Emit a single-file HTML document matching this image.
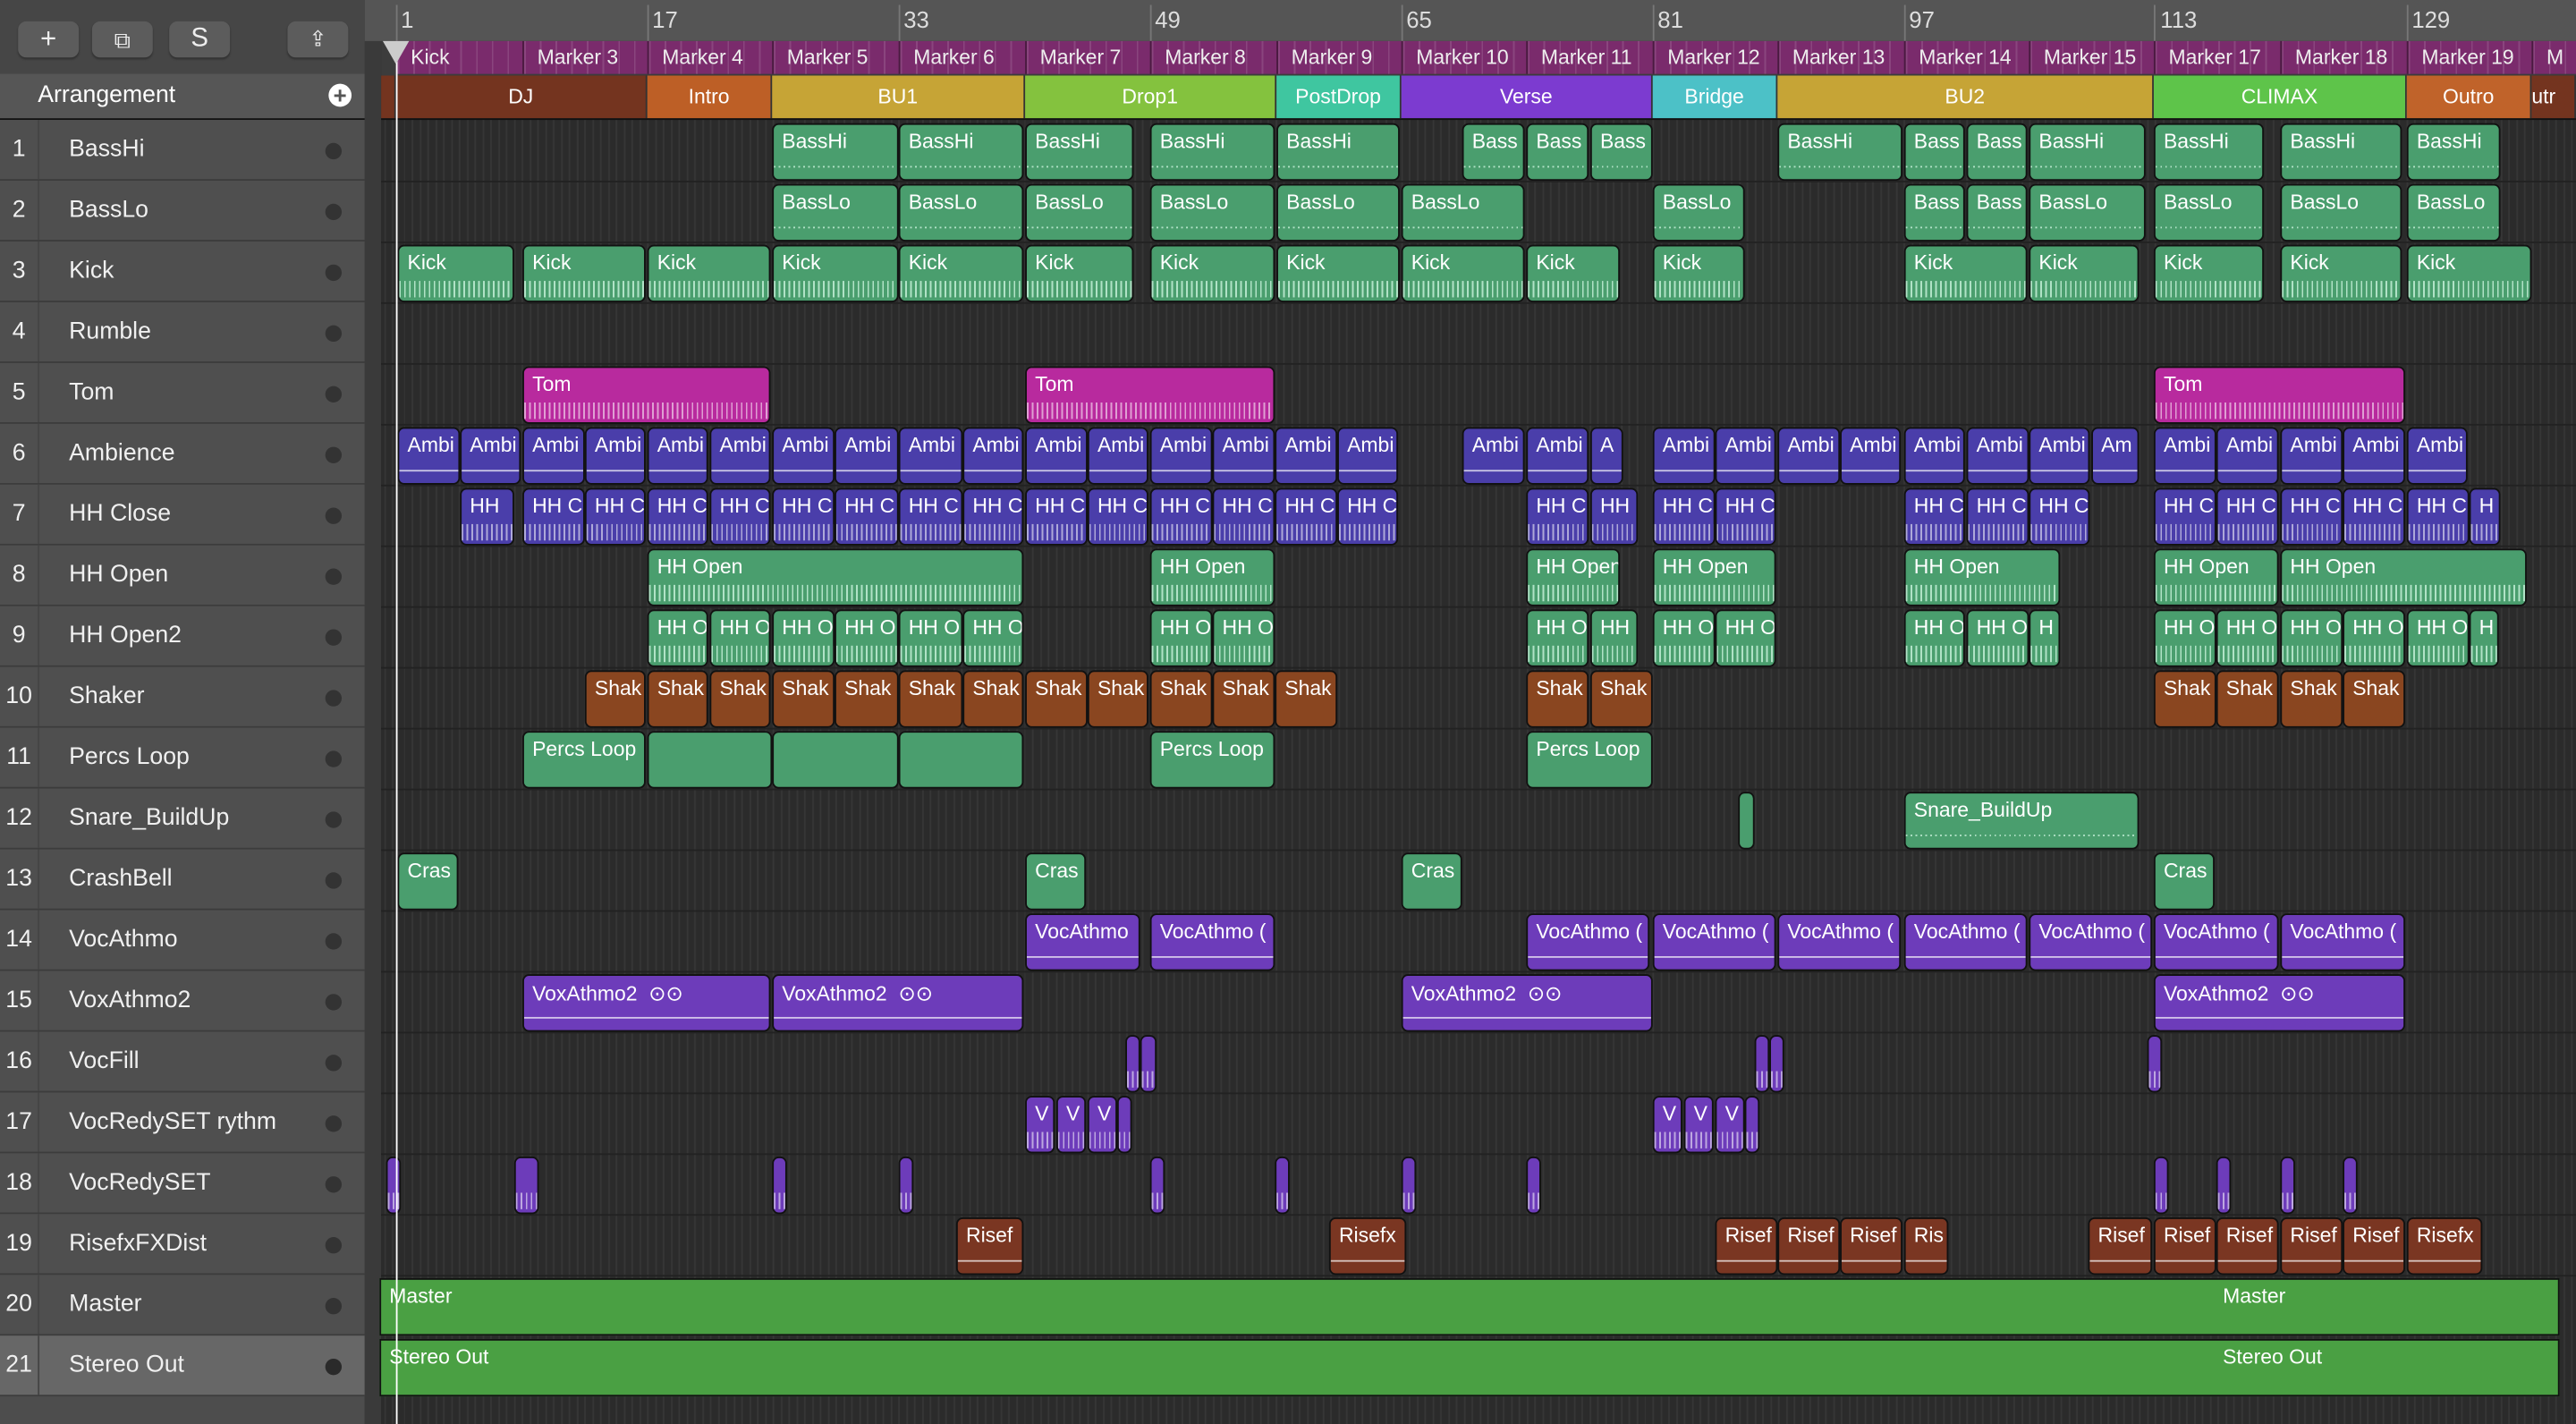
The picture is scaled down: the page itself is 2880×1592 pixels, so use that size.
<!DOCTYPE html>
<html><head><meta charset="utf-8"><style>
html,body{margin:0;padding:0;background:#2b2b2b;overflow:hidden}
#s{position:absolute;left:0;top:0;width:1568px;height:867px;transform:scale(1.836735);transform-origin:0 0;font-family:"Liberation Sans",sans-serif;background:#2b2b2b;overflow:hidden}
.ab{position:absolute}
#lp{left:0;top:0;width:222px;height:867px;background:#4d4d4d}
.btn{position:absolute;top:13px;width:37px;height:22px;border-radius:5px;background:#5c5c5c;box-shadow:0 1px 1px #333;color:#eee;text-align:center;font-size:17px;line-height:22px}
.tr{position:absolute;left:0;width:222px;height:36px;border-bottom:1px solid #3c3c3c;background:#4f4f4f;color:#f0f0f0;font-size:14.5px}
.tr .n{position:absolute;left:0;width:23px;top:10px;text-align:center}
.tr .sep{position:absolute;left:23px;top:0;width:1px;height:36px;background:#444}
.tr .t{position:absolute;left:42px;top:10px}
.tr .d{position:absolute;left:198px;top:14px;width:10px;height:10px;border-radius:50%;background:#333}
#grid{left:232px;top:73px;width:1336px;height:794px;background-color:#2b2b2b;background-image:repeating-linear-gradient(90deg,#363636 0 1px,transparent 1px 4.78px);background-position:9px 0}
.rl{position:absolute;left:232px;width:1336px;height:1px;background:#222}
.r{position:absolute;height:35px;box-sizing:border-box;border:1px solid #111;border-radius:4px;color:#fff;font-size:12.5px;font-style:normal;padding:3px 0 0 5px;overflow:hidden;white-space:nowrap}
.r:after{content:"";position:absolute;left:0;right:0;bottom:2px;height:10px;background:repeating-linear-gradient(90deg,rgba(255,255,255,.55) 0 1px,transparent 1px 3px)}
.nw:after{display:none}
.ln:after{height:1px;bottom:7px;background:rgba(255,255,255,.7)}
.g{background:#4a9e6e}.g:after{background:repeating-linear-gradient(90deg,rgba(220,255,235,.7) 0 1px,transparent 1px 3px)}
.b{background:#4a3eaa}.p{background:#b82a9e}.v{background:#6d3cba}.o{background:#8a4620}.rb{background:#7a3622}
.m{position:absolute;top:25px;height:20px;background:#7a2b6c;border-left:1px solid #4a1a40;color:#eee;font-size:12.5px;line-height:20px;padding-left:8px;box-sizing:border-box;background-image:repeating-linear-gradient(90deg,rgba(255,255,255,.12) 0 1px,transparent 1px 9.56px)}
.a{position:absolute;top:46px;height:26px;color:#fff;font-size:12.5px;line-height:26px;text-align:center;box-sizing:border-box;border-right:1px solid #333}
.bn{position:absolute;top:4px;color:#ddd;font-size:14px}
.bt{position:absolute;top:3px;width:1px;height:22px;background:#777}
.big{position:absolute;left:231px;width:1327px;height:35px;background:#4aa043;border:1px solid #111;box-sizing:border-box;color:#fff;font-size:12.5px}
</style></head><body><div id="s">
<div id="lp" class="ab"></div>
<div class="ab" style="left:0;top:0;width:222px;height:45px;background:#464646"></div>
<div class="btn" style="left:11px">+</div>
<div class="btn" style="left:56px;font-size:14px">⧉</div>
<div class="btn" style="left:103px;font-size:16px">S</div>
<div class="btn" style="left:175px;font-size:13px">⇪</div>
<div class="ab" style="left:0;top:45px;width:222px;height:27px;background:#565656;color:#fff;font-size:14.5px"><span style="position:absolute;left:23px;top:5px">Arrangement</span><span style="position:absolute;left:200px;top:6px;width:14px;height:14px;border-radius:50%;background:#fff;color:#555;text-align:center;line-height:14px;font-size:14px;font-weight:bold">+</span></div>
<div class="ab" style="left:0;top:72px;width:222px;height:1px;background:#111"></div>
<div class="tr" style="top:73px"><span class="n">1</span><span class="sep"></span><span class="t">BassHi</span><span class="d"></span></div>
<div class="tr" style="top:110px"><span class="n">2</span><span class="sep"></span><span class="t">BassLo</span><span class="d"></span></div>
<div class="tr" style="top:147px"><span class="n">3</span><span class="sep"></span><span class="t">Kick</span><span class="d"></span></div>
<div class="tr" style="top:184px"><span class="n">4</span><span class="sep"></span><span class="t">Rumble</span><span class="d"></span></div>
<div class="tr" style="top:221px"><span class="n">5</span><span class="sep"></span><span class="t">Tom</span><span class="d"></span></div>
<div class="tr" style="top:258px"><span class="n">6</span><span class="sep"></span><span class="t">Ambience</span><span class="d"></span></div>
<div class="tr" style="top:295px"><span class="n">7</span><span class="sep"></span><span class="t">HH Close</span><span class="d"></span></div>
<div class="tr" style="top:332px"><span class="n">8</span><span class="sep"></span><span class="t">HH Open</span><span class="d"></span></div>
<div class="tr" style="top:369px"><span class="n">9</span><span class="sep"></span><span class="t">HH Open2</span><span class="d"></span></div>
<div class="tr" style="top:406px"><span class="n">10</span><span class="sep"></span><span class="t">Shaker</span><span class="d"></span></div>
<div class="tr" style="top:443px"><span class="n">11</span><span class="sep"></span><span class="t">Percs Loop</span><span class="d"></span></div>
<div class="tr" style="top:480px"><span class="n">12</span><span class="sep"></span><span class="t">Snare_BuildUp</span><span class="d"></span></div>
<div class="tr" style="top:517px"><span class="n">13</span><span class="sep"></span><span class="t">CrashBell</span><span class="d"></span></div>
<div class="tr" style="top:554px"><span class="n">14</span><span class="sep"></span><span class="t">VocAthmo</span><span class="d"></span></div>
<div class="tr" style="top:591px"><span class="n">15</span><span class="sep"></span><span class="t">VoxAthmo2</span><span class="d"></span></div>
<div class="tr" style="top:628px"><span class="n">16</span><span class="sep"></span><span class="t">VocFill</span><span class="d"></span></div>
<div class="tr" style="top:665px"><span class="n">17</span><span class="sep"></span><span class="t">VocRedySET rythm</span><span class="d"></span></div>
<div class="tr" style="top:702px"><span class="n">18</span><span class="sep"></span><span class="t">VocRedySET</span><span class="d"></span></div>
<div class="tr" style="top:739px"><span class="n">19</span><span class="sep"></span><span class="t">RisefxFXDist</span><span class="d"></span></div>
<div class="tr" style="top:776px"><span class="n">20</span><span class="sep"></span><span class="t">Master</span><span class="d"></span></div>
<div class="tr" style="top:813px;background:#676767"><span class="n">21</span><span class="sep"></span><span class="t">Stereo Out</span><span class="d" style="background:#2a2a2a"></span></div>
<div class="ab" style="left:222px;top:0;width:10px;height:867px;background:#3a3a3a"></div>
<div class="ab" style="left:222px;top:0;width:1346px;height:25px;background:#555"></div>
<div class="ab" style="left:232px;top:25px;width:1336px;height:21px;background:#3c3c3c"></div>
<div id="grid" class="ab"></div>
<div class="rl" style="top:110px"></div><div class="rl" style="top:147px"></div><div class="rl" style="top:184px"></div><div class="rl" style="top:221px"></div><div class="rl" style="top:258px"></div><div class="rl" style="top:295px"></div><div class="rl" style="top:332px"></div><div class="rl" style="top:369px"></div><div class="rl" style="top:406px"></div><div class="rl" style="top:443px"></div><div class="rl" style="top:480px"></div><div class="rl" style="top:517px"></div><div class="rl" style="top:554px"></div><div class="rl" style="top:591px"></div><div class="rl" style="top:628px"></div><div class="rl" style="top:665px"></div><div class="rl" style="top:702px"></div><div class="rl" style="top:739px"></div><div class="rl" style="top:776px"></div>
<div class="bt" style="left:241px"></div><span class="bn" style="left:244px">1</span>
<div class="bt" style="left:394px"></div><span class="bn" style="left:397px">17</span>
<div class="bt" style="left:547px"></div><span class="bn" style="left:550px">33</span>
<div class="bt" style="left:700px"></div><span class="bn" style="left:703px">49</span>
<div class="bt" style="left:853px"></div><span class="bn" style="left:856px">65</span>
<div class="bt" style="left:1006px"></div><span class="bn" style="left:1009px">81</span>
<div class="bt" style="left:1159px"></div><span class="bn" style="left:1162px">97</span>
<div class="bt" style="left:1311px"></div><span class="bn" style="left:1315px">113</span>
<div class="bt" style="left:1465px"></div><span class="bn" style="left:1468px">129</span>
<div class="m" style="left:241px;width:77px">Kick</div>
<div class="m" style="left:318px;width:76px">Marker 3</div>
<div class="m" style="left:394px;width:76px">Marker 4</div>
<div class="m" style="left:470px;width:77px">Marker 5</div>
<div class="m" style="left:547px;width:77px">Marker 6</div>
<div class="m" style="left:624px;width:76px">Marker 7</div>
<div class="m" style="left:700px;width:77px">Marker 8</div>
<div class="m" style="left:777px;width:76px">Marker 9</div>
<div class="m" style="left:853px;width:76px">Marker 10</div>
<div class="m" style="left:929px;width:77px">Marker 11</div>
<div class="m" style="left:1006px;width:76px">Marker 12</div>
<div class="m" style="left:1082px;width:77px">Marker 13</div>
<div class="m" style="left:1159px;width:76px">Marker 14</div>
<div class="m" style="left:1235px;width:76px">Marker 15</div>
<div class="m" style="left:1311px;width:77px">Marker 17</div>
<div class="m" style="left:1388px;width:77px">Marker 18</div>
<div class="m" style="left:1465px;width:76px">Marker 19</div>
<div class="m" style="left:1541px;width:27px">M</div>
<div class="a" style="left:232px;width:9px;background:#74341f"></div>
<div class="a" style="left:241px;width:153px;background:#74341f">DJ</div>
<div class="a" style="left:394px;width:76px;background:#bd5f26">Intro</div>
<div class="a" style="left:470px;width:154px;background:#c6a436">BU1</div>
<div class="a" style="left:624px;width:153px;background:#84c23e">Drop1</div>
<div class="a" style="left:777px;width:76px;background:#3fc6a0">PostDrop</div>
<div class="a" style="left:853px;width:153px;background:#7c3bd0">Verse</div>
<div class="a" style="left:1006px;width:76px;background:#4cc1c7">Bridge</div>
<div class="a" style="left:1082px;width:229px;background:#c6a436">BU2</div>
<div class="a" style="left:1311px;width:154px;background:#5ec44a">CLIMAX</div>
<div class="a" style="left:1465px;width:76px;background:#c0632a">Outro</div>
<div class="a" style="left:1541px;width:27px;background:#74341f;text-align:left">utr</div>
<div class="ab" style="left:232px;top:72px;width:1336px;height:1px;background:#111"></div>

<div class="ab" style="left:0;top:75px">
<i class="r g ln" style="left:470px;width:77px">BassHi</i><i class="r g ln" style="left:547px;width:76px">BassHi</i><i class="r g ln" style="left:624px;width:66px">BassHi</i><i class="r g ln" style="left:700px;width:76px">BassHi</i><i class="r g ln" style="left:777px;width:75px">BassHi</i><i class="r g ln" style="left:890px;width:38px">Bass</i><i class="r g ln" style="left:929px;width:38px">Bass</i><i class="r g ln" style="left:968px;width:38px">Bass</i><i class="r g ln" style="left:1082px;width:76px">BassHi</i><i class="r g ln" style="left:1159px;width:37px">Bass</i><i class="r g ln" style="left:1197px;width:37px">Bass</i><i class="r g ln" style="left:1235px;width:71px">BassHi</i><i class="r g ln" style="left:1311px;width:67px">BassHi</i><i class="r g ln" style="left:1388px;width:74px">BassHi</i><i class="r g ln" style="left:1465px;width:57px">BassHi</i>
</div>
<div class="ab" style="left:0;top:112px">
<i class="r g ln" style="left:470px;width:77px">BassLo</i><i class="r g ln" style="left:547px;width:76px">BassLo</i><i class="r g ln" style="left:624px;width:66px">BassLo</i><i class="r g ln" style="left:700px;width:76px">BassLo</i><i class="r g ln" style="left:777px;width:75px">BassLo</i><i class="r g ln" style="left:853px;width:75px">BassLo</i><i class="r g ln" style="left:1006px;width:56px">BassLo</i><i class="r g ln" style="left:1159px;width:37px">Bass</i><i class="r g ln" style="left:1197px;width:37px">Bass</i><i class="r g ln" style="left:1235px;width:71px">BassLo</i><i class="r g ln" style="left:1311px;width:67px">BassLo</i><i class="r g ln" style="left:1388px;width:74px">BassLo</i><i class="r g ln" style="left:1465px;width:57px">BassLo</i>
</div>
<div class="ab" style="left:0;top:149px">
<i class="r g" style="left:242px;width:71px">Kick</i><i class="r g" style="left:318px;width:75px">Kick</i><i class="r g" style="left:394px;width:75px">Kick</i><i class="r g" style="left:470px;width:77px">Kick</i><i class="r g" style="left:547px;width:76px">Kick</i><i class="r g" style="left:624px;width:66px">Kick</i><i class="r g" style="left:700px;width:76px">Kick</i><i class="r g" style="left:777px;width:75px">Kick</i><i class="r g" style="left:853px;width:75px">Kick</i><i class="r g" style="left:929px;width:57px">Kick</i><i class="r g" style="left:1006px;width:56px">Kick</i><i class="r g" style="left:1159px;width:75px">Kick</i><i class="r g" style="left:1235px;width:67px">Kick</i><i class="r g" style="left:1311px;width:67px">Kick</i><i class="r g" style="left:1388px;width:74px">Kick</i><i class="r g" style="left:1465px;width:76px">Kick</i>
</div>
<div class="ab" style="left:0;top:223px">
<i class="r p" style="left:318px;width:151px">Tom</i><i class="r p" style="left:624px;width:152px">Tom</i><i class="r p" style="left:1311px;width:153px">Tom</i>
</div>
<div class="ab" style="left:0;top:260px">
<i class="r b ln" style="left:242px;width:38px">Ambi</i><i class="r b ln" style="left:280px;width:37px">Ambi</i><i class="r b ln" style="left:318px;width:38px">Ambi</i><i class="r b ln" style="left:356px;width:37px">Ambi</i><i class="r b ln" style="left:394px;width:37px">Ambi</i><i class="r b ln" style="left:432px;width:37px">Ambi</i><i class="r b ln" style="left:470px;width:38px">Ambi</i><i class="r b ln" style="left:508px;width:39px">Ambi</i><i class="r b ln" style="left:547px;width:39px">Ambi</i><i class="r b ln" style="left:586px;width:37px">Ambi</i><i class="r b ln" style="left:624px;width:38px">Ambi</i><i class="r b ln" style="left:662px;width:37px">Ambi</i><i class="r b ln" style="left:700px;width:38px">Ambi</i><i class="r b ln" style="left:738px;width:38px">Ambi</i><i class="r b ln" style="left:776px;width:38px">Ambi</i><i class="r b ln" style="left:814px;width:37px">Ambi</i><i class="r b ln" style="left:890px;width:38px">Ambi</i><i class="r b ln" style="left:929px;width:38px">Ambi</i><i class="r b ln" style="left:968px;width:20px">A</i><i class="r b ln" style="left:1006px;width:38px">Ambi</i><i class="r b ln" style="left:1044px;width:37px">Ambi</i><i class="r b ln" style="left:1082px;width:38px">Ambi</i><i class="r b ln" style="left:1120px;width:37px">Ambi</i><i class="r b ln" style="left:1159px;width:37px">Ambi</i><i class="r b ln" style="left:1197px;width:38px">Ambi</i><i class="r b ln" style="left:1235px;width:37px">Ambi</i><i class="r b ln" style="left:1273px;width:29px">Am</i><i class="r b ln" style="left:1311px;width:38px">Ambi</i><i class="r b ln" style="left:1349px;width:38px">Ambi</i><i class="r b ln" style="left:1388px;width:38px">Ambi</i><i class="r b ln" style="left:1426px;width:38px">Ambi</i><i class="r b ln" style="left:1465px;width:37px">Ambi</i>
</div>
<div class="ab" style="left:0;top:297px">
<i class="r b" style="left:280px;width:33px">HH</i><i class="r b" style="left:318px;width:38px">HH C</i><i class="r b" style="left:356px;width:37px">HH C</i><i class="r b" style="left:394px;width:37px">HH C</i><i class="r b" style="left:432px;width:37px">HH C</i><i class="r b" style="left:470px;width:38px">HH C</i><i class="r b" style="left:508px;width:39px">HH C</i><i class="r b" style="left:547px;width:39px">HH C</i><i class="r b" style="left:586px;width:37px">HH C</i><i class="r b" style="left:624px;width:38px">HH C</i><i class="r b" style="left:662px;width:37px">HH C</i><i class="r b" style="left:700px;width:38px">HH C</i><i class="r b" style="left:738px;width:38px">HH C</i><i class="r b" style="left:776px;width:38px">HH C</i><i class="r b" style="left:814px;width:37px">HH C</i><i class="r b" style="left:929px;width:38px">HH C</i><i class="r b" style="left:968px;width:29px">HH</i><i class="r b" style="left:1006px;width:38px">HH C</i><i class="r b" style="left:1044px;width:37px">HH C</i><i class="r b" style="left:1159px;width:37px">HH C</i><i class="r b" style="left:1197px;width:38px">HH C</i><i class="r b" style="left:1235px;width:37px">HH C</i><i class="r b" style="left:1311px;width:38px">HH C</i><i class="r b" style="left:1349px;width:38px">HH C</i><i class="r b" style="left:1388px;width:38px">HH C</i><i class="r b" style="left:1426px;width:38px">HH C</i><i class="r b" style="left:1465px;width:38px">HH C</i><i class="r b" style="left:1503px;width:19px">H</i>
</div>
<div class="ab" style="left:0;top:334px">
<i class="r g" style="left:394px;width:229px">HH Open</i><i class="r g" style="left:700px;width:76px">HH Open</i><i class="r g" style="left:929px;width:57px">HH Open</i><i class="r g" style="left:1006px;width:75px">HH Open</i><i class="r g" style="left:1159px;width:95px">HH Open</i><i class="r g" style="left:1311px;width:76px">HH Open</i><i class="r g" style="left:1388px;width:150px">HH Open</i>
</div>
<div class="ab" style="left:0;top:371px">
<i class="r g" style="left:394px;width:37px">HH O</i><i class="r g" style="left:432px;width:37px">HH O</i><i class="r g" style="left:470px;width:38px">HH O</i><i class="r g" style="left:508px;width:39px">HH O</i><i class="r g" style="left:547px;width:39px">HH O</i><i class="r g" style="left:586px;width:37px">HH O</i><i class="r g" style="left:700px;width:38px">HH O</i><i class="r g" style="left:738px;width:38px">HH O</i><i class="r g" style="left:929px;width:38px">HH O</i><i class="r g" style="left:968px;width:29px">HH</i><i class="r g" style="left:1006px;width:38px">HH O</i><i class="r g" style="left:1044px;width:37px">HH O</i><i class="r g" style="left:1159px;width:37px">HH O</i><i class="r g" style="left:1197px;width:38px">HH O</i><i class="r g" style="left:1235px;width:19px">H</i><i class="r g" style="left:1311px;width:38px">HH O</i><i class="r g" style="left:1349px;width:38px">HH O</i><i class="r g" style="left:1388px;width:38px">HH O</i><i class="r g" style="left:1426px;width:38px">HH O</i><i class="r g" style="left:1465px;width:38px">HH O</i><i class="r g" style="left:1503px;width:18px">H</i>
</div>
<div class="ab" style="left:0;top:408px">
<i class="r o nw" style="left:356px;width:37px">Shak</i><i class="r o nw" style="left:394px;width:37px">Shak</i><i class="r o nw" style="left:432px;width:37px">Shak</i><i class="r o nw" style="left:470px;width:38px">Shak</i><i class="r o nw" style="left:508px;width:39px">Shak</i><i class="r o nw" style="left:547px;width:39px">Shak</i><i class="r o nw" style="left:586px;width:37px">Shak</i><i class="r o nw" style="left:624px;width:38px">Shak</i><i class="r o nw" style="left:662px;width:37px">Shak</i><i class="r o nw" style="left:700px;width:38px">Shak</i><i class="r o nw" style="left:738px;width:38px">Shak</i><i class="r o nw" style="left:776px;width:38px">Shak</i><i class="r o nw" style="left:929px;width:38px">Shak</i><i class="r o nw" style="left:968px;width:38px">Shak</i><i class="r o nw" style="left:1311px;width:38px">Shak</i><i class="r o nw" style="left:1349px;width:38px">Shak</i><i class="r o nw" style="left:1388px;width:38px">Shak</i><i class="r o nw" style="left:1426px;width:38px">Shak</i>
</div>
<div class="ab" style="left:0;top:445px">
<i class="r g nw" style="left:318px;width:75px">Percs Loop</i><i class="r g nw" style="left:394px;width:76px"></i><i class="r g nw" style="left:470px;width:77px"></i><i class="r g nw" style="left:547px;width:76px"></i><i class="r g nw" style="left:700px;width:76px">Percs Loop</i><i class="r g nw" style="left:929px;width:77px">Percs Loop</i>
</div>
<div class="ab" style="left:0;top:482px">
<i class="r g nw" style="left:1058px;width:10px;padding:0"></i><i class="r g ln" style="left:1159px;width:143px">Snare_BuildUp</i>
</div>
<div class="ab" style="left:0;top:519px">
<i class="r g nw" style="left:242px;width:37px">Cras</i><i class="r g nw" style="left:624px;width:37px">Cras</i><i class="r g nw" style="left:853px;width:37px">Cras</i><i class="r g nw" style="left:1311px;width:37px">Cras</i>
</div>
<div class="ab" style="left:0;top:556px">
<i class="r v ln" style="left:624px;width:70px">VocAthmo</i><i class="r v ln" style="left:700px;width:76px">VocAthmo (</i><i class="r v ln" style="left:929px;width:75px">VocAthmo (</i><i class="r v ln" style="left:1006px;width:75px">VocAthmo (</i><i class="r v ln" style="left:1082px;width:75px">VocAthmo (</i><i class="r v ln" style="left:1159px;width:75px">VocAthmo (</i><i class="r v ln" style="left:1235px;width:75px">VocAthmo (</i><i class="r v ln" style="left:1311px;width:76px">VocAthmo (</i><i class="r v ln" style="left:1388px;width:76px">VocAthmo (</i>
</div>
<div class="ab" style="left:0;top:593px">
<i class="r v ln" style="left:318px;width:151px">VoxAthmo2 &nbsp;⊙⊙</i><i class="r v ln" style="left:470px;width:153px">VoxAthmo2 &nbsp;⊙⊙</i><i class="r v ln" style="left:853px;width:153px">VoxAthmo2 &nbsp;⊙⊙</i><i class="r v ln" style="left:1311px;width:153px">VoxAthmo2 &nbsp;⊙⊙</i>
</div>
<div class="ab" style="left:0;top:630px">
<i class="r v" style="left:685px;width:9px;padding:0"></i><i class="r v" style="left:694px;width:10px;padding:0"></i><i class="r v" style="left:1068px;width:9px;padding:0"></i><i class="r v" style="left:1077px;width:9px;padding:0"></i><i class="r v" style="left:1307px;width:9px;padding:0"></i>
</div>
<div class="ab" style="left:0;top:667px">
<i class="r v" style="left:624px;width:18px">V</i><i class="r v" style="left:643px;width:18px">V</i><i class="r v" style="left:662px;width:18px">V</i><i class="r v" style="left:680px;width:9px;padding:0"></i><i class="r v" style="left:1006px;width:18px">V</i><i class="r v" style="left:1025px;width:18px">V</i><i class="r v" style="left:1044px;width:18px">V</i><i class="r v" style="left:1062px;width:9px;padding:0"></i>
</div>
<div class="ab" style="left:0;top:704px">
<i class="r v" style="left:235px;width:9px;padding:0"></i><i class="r v" style="left:313px;width:15px;padding:0"></i><i class="r v" style="left:470px;width:9px;padding:0"></i><i class="r v" style="left:547px;width:9px;padding:0"></i><i class="r v" style="left:700px;width:9px;padding:0"></i><i class="r v" style="left:776px;width:9px;padding:0"></i><i class="r v" style="left:853px;width:9px;padding:0"></i><i class="r v" style="left:929px;width:9px;padding:0"></i><i class="r v" style="left:1311px;width:9px;padding:0"></i><i class="r v" style="left:1349px;width:9px;padding:0"></i><i class="r v" style="left:1388px;width:9px;padding:0"></i><i class="r v" style="left:1426px;width:9px;padding:0"></i>
</div>
<div class="ab" style="left:0;top:741px">
<i class="r rb ln" style="left:582px;width:41px">Risef</i><i class="r rb ln" style="left:809px;width:47px">Risefx</i><i class="r rb ln" style="left:1044px;width:38px">Risef</i><i class="r rb ln" style="left:1082px;width:38px">Risef</i><i class="r rb ln" style="left:1120px;width:38px">Risef</i><i class="r rb ln" style="left:1159px;width:27px">Ris</i><i class="r rb ln" style="left:1271px;width:39px">Risef</i><i class="r rb ln" style="left:1311px;width:38px">Risef</i><i class="r rb ln" style="left:1349px;width:38px">Risef</i><i class="r rb ln" style="left:1388px;width:38px">Risef</i><i class="r rb ln" style="left:1426px;width:38px">Risef</i><i class="r rb ln" style="left:1465px;width:46px">Risefx</i>
</div>
<div class="big" style="top:778px"><span style="position:absolute;left:5px;top:3px">Master</span><span style="position:absolute;left:1121px;top:3px">Master</span></div>
<div class="big" style="top:815px"><span style="position:absolute;left:5px;top:3px">Stereo Out</span><span style="position:absolute;left:1121px;top:3px">Stereo Out</span></div>
<div class="ab" style="left:241px;top:30px;width:1px;height:837px;background:#fff"></div>
<div class="ab" style="left:233px;top:25px;width:0;height:0;border-left:8px solid transparent;border-right:8px solid transparent;border-top:14px solid #ccc"></div>
</div></body></html>
